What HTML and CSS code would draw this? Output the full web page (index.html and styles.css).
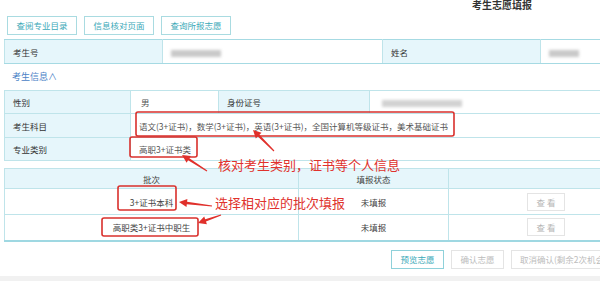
FILE: index.html
```html
<!DOCTYPE html>
<html lang="zh-CN">
<head>
<meta charset="utf-8">
<link rel="stylesheet" href="styles.css">
</head>
<body>
<div class="page">
  <div class="title">考生志愿填报</div>
  <div class="toolbar">
    <span class="tbtn">查阅专业目录</span>
    <span class="tbtn">信息核对页面</span>
    <span class="tbtn">查询所报志愿</span>
  </div>
  <table class="grid t1">
    <colgroup><col style="width:158px"><col style="width:220px"><col style="width:158px"><col></colgroup>
    <tr>
      <td class="lbl">考生号</td>
      <td class="val"><span class="blur b1"></span></td>
      <td class="lbl">姓名</td>
      <td class="val"><span class="blur b2"></span></td>
    </tr>
  </table>
  <div class="section">考生信息∧</div>
  <table class="grid t2">
    <colgroup><col style="width:126px"><col style="width:88px"><col style="width:151px"><col></colgroup>
    <tr class="r1">
      <td class="lbl">性别</td>
      <td class="val">男</td>
      <td class="lbl">身份证号</td>
      <td class="val"><span class="blur b3"></span></td>
    </tr>
    <tr class="r2">
      <td class="lbl">考生科目</td>
      <td class="val" colspan="3">语文(3+证书)，数学(3+证书)，英语(3+证书)，全国计算机等级证书，美术基础证书</td>
    </tr>
    <tr class="r3">
      <td class="lbl">专业类别</td>
      <td class="val" colspan="3">高职3+证书类</td>
    </tr>
  </table>
  <table class="grid t3">
    <colgroup><col style="width:294px"><col style="width:150px"><col></colgroup>
    <tr class="head">
      <td>批次</td>
      <td>填报状态</td>
      <td></td>
    </tr>
    <tr class="row">
      <td>3+证书本科</td>
      <td>未填报</td>
      <td><span class="vbtn">查 看</span></td>
    </tr>
    <tr class="row">
      <td>高职类3+证书中职生</td>
      <td>未填报</td>
      <td><span class="vbtn">查 看</span></td>
    </tr>
  </table>
  <div class="actions">
    <span class="abtn primary">预览志愿</span>
    <span class="abtn">确认志愿</span>
    <span class="abtn wide">取消确认(剩余2次机会)</span>
  </div>
</div>
<div class="footer"></div>

<svg class="marks" width="600" height="281" viewBox="0 0 600 281">
  <g fill="none" stroke="#d9302c" stroke-width="1.6">
    <rect x="136" y="112" width="318" height="24" rx="2"/>
    <rect x="130" y="137" width="67" height="20" rx="2"/>
    <rect x="118" y="186" width="58" height="24" rx="2"/>
    <rect x="102" y="218" width="96" height="18" rx="2"/>
  </g>
  <g fill="#e0302b">
    <polygon points="253,130 255.8,138.5 257.8,136.5 273.6,151.4 274.4,150.6 259.5,134.8 261.5,132.8"/>
    <polygon points="182,155 186.6,162.7 188.1,160.3 206.7,171.5 207.3,170.5 189.4,158.3 190.9,155.9"/>
    <polygon points="179,202 186.5,206.9 186.8,204.2 211.9,206.6 212.1,205.4 187.1,201.8 187.4,199"/>
    <polygon points="198,223 206.9,224.2 206,221.5 221.2,215.6 220.8,214.4 205.2,219.2 204.2,216.6"/>
  </g>
</svg>
<div class="note n1">核对考生类别，证书等个人信息</div>
<div class="note n2">选择相对应的批次填报</div>
</body>
</html>
```
FILE: styles.css
```css
html, body {
  margin: 0;
  padding: 0;
}
body {
  width: 600px;
  height: 281px;
  overflow: hidden;
  position: relative;
  background: #fff;
  font-family: "Noto Sans CJK SC", "Noto Sans", sans-serif;
  font-size: 8.5px;
  color: #333;
}
.page {
  width: 640px;
  padding-left: 4px;
}
.title {
  height: 10px;
  line-height: 10px;
  font-size: 10px;
  font-weight: bold;
  color: #333;
  padding-left: 468px;
}
.toolbar {
  display: flex;
  gap: 7px;
  margin: 6px 0 0 3px;
}
.tbtn {
  box-sizing: border-box;
  width: 70px;
  height: 19px;
  line-height: 17px;
  border: 1px solid #a9dbe1;
  color: #3aa9b8;
  text-align: center;
  background: #fff;
}
.grid {
  border-collapse: collapse;
  table-layout: fixed;
  width: 640px;
}
.grid td {
  border: 1px solid #bfe4ea;
  padding: 0 0 0 8px;
  white-space: nowrap;
  overflow: hidden;
}
.grid td.lbl {
  background: #e6f6fb;
  color: #333;
}
.grid td.val {
  background: #fff;
  color: #555;
  padding-left: 10px;
}
.t1 {
  margin-top: 4px;
}
.t1 tr {
  height: 24px;
}
.t1 td {
  border-top-color: #a6dae3;
  border-bottom-color: #a6dae3;
}
.blur {
  display: inline-block;
  height: 7px;
  background: #c9c9c9;
  filter: blur(1.6px);
  vertical-align: middle;
}
.b1 { width: 50px; margin-left: -2px; }
.b2 { width: 30px; margin-left: -2px; }
.b3 { width: 80px; margin-left: 2px; background: #d2d2d2; }
.section {
  height: 26px;
  line-height: 26px;
  padding-left: 8px;
  color: #4a82c6;
  font-size: 9px;
}
.t2 .r1 { height: 23px; }
.t2 .r2 { height: 24px; }
.t2 .r3 { height: 23px; }
.t2 .r2 td.val, .t2 .r3 td.val {
  padding-left: 8px;
}
.t3 {
  margin-top: 7px;
  border-bottom: 2px solid #9fd8e2;
}
.t3 td {
  text-align: center;
  padding: 0;
  color: #444;
}
.t3 .head {
  height: 20px;
}
.t3 .head td {
  background: #e6f6fb;
}
.t3 .row {
  height: 26px;
}
.t3 .row td {
  background: #fff;
}
.t3 tr:last-child td {
  border-bottom: 2px solid #9fd8e2;
}
.vbtn {
  display: inline-block;
  box-sizing: border-box;
  width: 38px;
  height: 18px;
  line-height: 16px;
  border: 1px solid #e4e4e4;
  color: #b5b5b5;
  vertical-align: middle;
}
.actions {
  display: flex;
  gap: 7px;
  margin-top: 8px;
  padding-left: 387px;
}
.abtn {
  box-sizing: border-box;
  height: 19px;
  line-height: 17px;
  width: 53px;
  text-align: center;
  border: 1px solid #e4e4e4;
  color: #bcbcbc;
  white-space: nowrap;
  flex: none;
}
.abtn.primary {
  border-color: #8fd1da;
  color: #3aa9b8;
}
.abtn.wide {
  width: 110px;
  padding-left: 8px;
  text-align: left;
}
.footer {
  position: absolute;
  left: 0;
  right: 0;
  bottom: 0;
  height: 5px;
  background: #f1f1f1;
}
.marks {
  position: absolute;
  left: 0;
  top: 0;
  pointer-events: none;
}
.note {
  position: absolute;
  color: #e0322d;
  font-size: 13px;
  line-height: 16px;
  white-space: nowrap;
}
.n1 { left: 218px; top: 157px; }
.n2 { left: 215px; top: 195px; }
```
